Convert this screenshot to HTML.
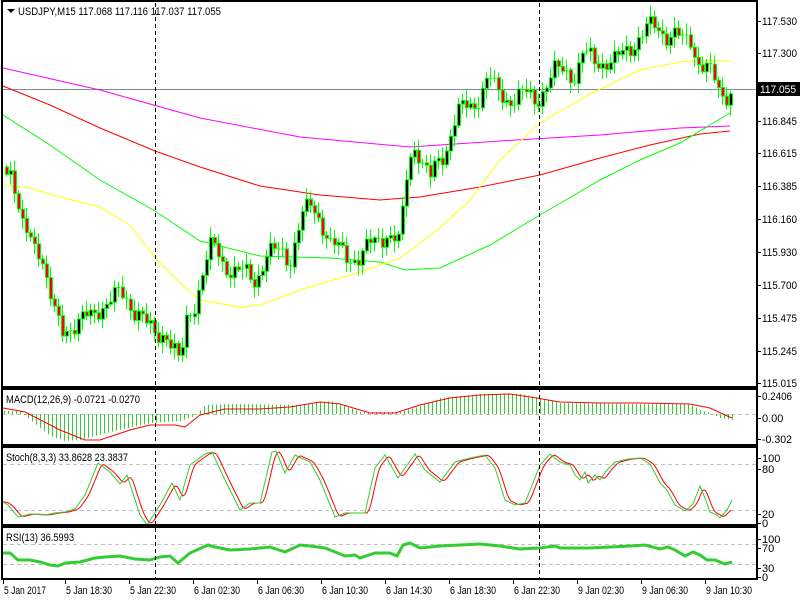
<!DOCTYPE html>
<html><head><meta charset="utf-8"><style>
html,body{margin:0;padding:0;background:#fff;width:800px;height:600px;overflow:hidden}
svg{display:block}
text{font-family:"Liberation Sans",sans-serif;font-size:11px;fill:#000}
</style></head><body>
<svg id="s" width="800" height="600" xmlns="http://www.w3.org/2000/svg">
<rect width="800" height="600" fill="#fff"/>
<g id="grid" stroke="#c0c0c0" stroke-dasharray="4,3" stroke-width="1">
<line x1="3" x2="757" y1="414.5" y2="414.5"/>
<line x1="3" x2="757" y1="464.5" y2="464.5"/>
<line x1="3" x2="757" y1="510.5" y2="510.5"/>
<line x1="3" x2="757" y1="544.5" y2="544.5"/>
<line x1="3" x2="757" y1="564.5" y2="564.5"/>
</g>
<line x1="3" x2="757" y1="89.5" y2="89.5" stroke="#808a94"/>
<g id="dyn"></g>
<g stroke="#000" stroke-dasharray="4,3"><line x1="155.5" x2="155.5" y1="3" y2="579"/><line x1="539.5" x2="539.5" y1="3" y2="579"/></g>
<g fill="none" stroke="#000" stroke-width="2">
<rect x="2" y="1" width="755" height="386"/>
<rect x="2" y="389" width="755" height="56"/>
<rect x="2" y="447" width="755" height="78"/>
<rect x="2" y="527" width="755" height="52"/>
</g>
<path d="M7 9h8l-4 4z" fill="#000"/>
<text x="18" y="15" textLength="203" lengthAdjust="spacingAndGlyphs">USDJPY,M15  117.068 117.116 117.037 117.055</text>
<text x="6" y="403" textLength="134" lengthAdjust="spacingAndGlyphs">MACD(12,26,9) -0.0721 -0.0270</text>
<text x="6" y="461" textLength="122" lengthAdjust="spacingAndGlyphs">Stoch(8,3,3) 33.8628 23.3837</text>
<text x="6" y="541" textLength="68" lengthAdjust="spacingAndGlyphs">RSI(13) 36.5993</text>
<g id="ax"></g>
<rect x="757" y="82" width="43" height="14" fill="#000"/>
<text x="760" y="93" style="fill:#fff" textLength="36" lengthAdjust="spacingAndGlyphs">117.055</text>
</svg>
<script>
(function(){
var NS="http://www.w3.org/2000/svg",dyn=document.getElementById('dyn'),ax=document.getElementById('ax');
function el(p,t,a,txt){var e=document.createElementNS(NS,t);for(var k in a)e.setAttribute(k,String(a[k]));if(txt)e.textContent=txt;p.appendChild(e);return e;}
function pl(pts,c,w){el(dyn,'polyline',{points:pts.map(function(p){return p[0]+','+p[1]}).join(' '),fill:'none',stroke:c,'stroke-width':w||1});}
function interp(pts,x){if(x<=pts[0][0])return pts[0][1];for(var i=1;i<pts.length;i++){if(x<=pts[i][0]){var a=pts[i-1],b=pts[i];return a[1]+(b[1]-a[1])*(x-a[0])/(b[0]-a[0]);}}return pts[pts.length-1][1];}
var pl_=[["117.530",21],["117.300",53],["116.845",121],["116.615",153],["116.385",186],["116.160",219],["115.930",252],["115.700",285],["115.475",318],["115.245",351],["115.015",383],["0.2406",396],["0.00",418],["-0.302",439],["100",458],["80",469],["20",514],["0",523],["100",539],["70",548],["30",568],["0",577]];
pl_.forEach(function(a){el(ax,'line',{x1:757,x2:761,y1:a[1]+0.5,y2:a[1]+0.5,stroke:'#000'});var t=el(ax,'text',{x:762,y:a[1]+4},a[0]);if(a[0].length>=6){t.setAttribute('textLength',a[0].length*5);t.setAttribute('lengthAdjust','spacingAndGlyphs');}});
var tl=[["5 Jan 2017",3],["5 Jan 18:30",65],["5 Jan 22:30",129],["6 Jan 02:30",193],["6 Jan 06:30",257],["6 Jan 10:30",321],["6 Jan 14:30",385],["6 Jan 18:30",449],["6 Jan 22:30",513],["9 Jan 02:30",577],["9 Jan 06:30",641],["9 Jan 10:30",705]];
tl.forEach(function(a){el(ax,'line',{x1:a[1]+0.5,x2:a[1]+0.5,y1:579,y2:584,stroke:'#000'});el(ax,'text',{x:a[1]+1,y:594,textLength:(a[0].length==10?42:46),lengthAdjust:'spacingAndGlyphs'},a[0]);});
pl([[3,68],[100,90],[200,118],[300,137],[410,147],[500,141],[600,135],[680,128],[730,126]],'#ff00ff');
pl([[3,86],[50,105],[100,128],[155,151],[200,167],[260,186],[320,195],[380,200],[420,197],[480,187],[540,175],[600,158],[650,145],[700,134],[730,131]],'#ff0000');
pl([[3,115],[50,145],[100,180],[155,211],[200,241],[260,256],[330,258],[380,262],[405,270],[440,268],[490,245],[540,215],[600,180],[640,160],[680,143],[710,125],[730,113]],'#00ff00');
pl([[3,185],[30,188],[60,197],[100,207],[130,225],[155,258],[180,283],[200,300],[240,307],[260,305],[300,290],[360,272],[400,258],[440,228],[470,200],[500,160],[540,123],[590,94],[640,70],[680,62],[700,60],[730,61]],'#ffff00');
var cp=[[5,167],[12,168],[16,205],[22,230],[30,240],[40,248],[48,290],[55,320],[62,332],[70,325],[80,320],[92,318],[100,305],[110,298],[120,296],[130,305],[140,312],[148,330],[155,338],[165,330],[172,345],[180,368],[185,325],[195,300],[203,268],[212,245],[222,262],[232,270],[245,275],[255,280],[265,255],[280,252],[290,258],[300,220],[310,206],[320,218],[330,245],[345,255],[360,258],[370,245],[385,232],[400,246],[403,200],[408,160],[415,142],[422,165],[430,180],[438,160],[445,150],[452,125],[460,110],[472,106],[480,92],[488,76],[495,92],[505,98],[515,97],[525,95],[535,100],[545,85],[555,72],[565,70],[575,75],[582,55],[595,62],[605,60],[615,62],[625,52],[635,40],[645,30],[655,28],[665,33],[675,34],[683,44],[690,40],[697,60],[705,66],[713,80],[720,97],[727,92],[731,88]];
var wick='',bull='',bear='',dojis='';
var prev=167;
for(var x=6;x<=731;x+=4){
 var n1=Math.sin(x*1.37)*8+Math.sin(x*0.53)*5;
 var c=interp(cp,x)+n1;var o=prev;prev=c;
 var tp=Math.min(o,c),bt=Math.max(o,c);
 var hi=tp-2-Math.abs(Math.sin(x*2.1))*9,lo=bt+2+Math.abs(Math.cos(x*1.3))*9;
 wick+='M'+(x+0.5)+' '+hi.toFixed(1)+'V'+lo.toFixed(1);
 if(bt-tp<2){dojis+='M'+(x-1)+' '+(tp+0.5).toFixed(1)+'h3';}
 else{var r='M'+(x-0.5)+' '+tp.toFixed(1)+'h3V'+bt.toFixed(1)+'h-3Z';if(c<o)bull+=r;else bear+=r;}
}
el(dyn,'path',{d:wick,stroke:'#00ff00',fill:'none'});
if(dojis)el(dyn,'path',{d:dojis,stroke:'#00ff00',fill:'none'});
el(dyn,'path',{d:bull,stroke:'#00ff00',fill:'#000'});
el(dyn,'path',{d:bear,stroke:'#00ff00',fill:'#ff0000'});
var hp=[[3,411],[20,411],[25,416],[50,436],[65,441],[80,440],[110,432],[150,423],[180,421],[195,416],[205,405],[230,404],[300,405],[330,401],[350,408],[360,412],[400,412],[420,406],[440,398],[480,394],[520,394],[540,398],[560,403],[640,404],[690,404],[700,410],[710,413],[720,418],[732,420]];
var hd='';for(var x2=4;x2<=732;x2+=4){hd+='M'+(x2+0.5)+' 414V'+interp(hp,x2).toFixed(1);}
el(dyn,'path',{d:hd,stroke:'#32cd32',fill:'none'});
pl([[3,408],[25,412],[60,430],[85,440],[100,440],[130,430],[150,425],[175,425],[185,427],[200,415],[225,409],[260,409],[290,407],[320,402],[340,404],[370,413],[395,413],[420,405],[450,398],[480,395],[510,394],[530,397],[560,402],[600,403],[640,403],[690,404],[710,408],[725,415],[732,418]],'#ff0000');
var sg=[[3,502],[8,505],[18,517],[30,514],[45,515],[55,513],[65,512],[75,509],[85,495],[98,463],[110,472],[120,484],[127,475],[140,515],[147,525],[160,505],[172,483],[180,500],[190,465],[205,454],[212,452],[225,480],[240,510],[250,503],[260,503],[272,452],[276,451],[285,473],[295,455],[310,462],[320,480],[335,517],[345,513],[355,513],[365,513],[375,468],[385,455],[398,478],[415,454],[425,470],[440,482],[455,462],[470,458],[485,455],[495,468],[505,500],[515,505],[525,503],[540,465],[550,454],[560,462],[570,465],[575,475],[580,480],[585,472],[588,483],[595,475],[600,480],[607,470],[615,462],[620,461],[628,459],[640,458],[650,464],[656,475],[660,483],[667,490],[675,505],[685,511],[693,504],[700,486],[705,498],[710,512],[717,515],[720,518],[727,510],[732,500]];
var sr=[];for(var x3=3;x3<=732;x3+=2){var v=(interp(sg,x3-2)+interp(sg,x3-4)+interp(sg,x3-6))/3;if(x3>=725)v=interp([[725,516],[732,509]],x3);sr.push([x3,v.toFixed(1)]);}
pl(sr,'#ff0000');pl(sg,'#32cd32');
pl([[3,553],[10,553],[18,560],[30,560],[40,562],[50,565],[58,566],[65,563],[80,562],[95,558],[105,557],[120,556],[135,559],[150,560],[160,557],[170,556],[178,563],[190,553],[208,545],[215,547],[230,550],[250,549],[270,547],[285,552],[300,545],[310,546],[325,548],[345,556],[355,555],[360,558],[375,553],[390,553],[397,556],[403,545],[410,543],[420,548],[440,546],[460,545],[480,544],[500,546],[520,549],[540,548],[555,546],[560,548],[575,548],[590,548],[610,547],[630,546],[645,545],[660,549],[668,547],[675,550],[685,556],[693,552],[700,555],[707,560],[715,560],[725,564],[732,562]],'#32cd32',3);
})();
</script>
</body></html>
